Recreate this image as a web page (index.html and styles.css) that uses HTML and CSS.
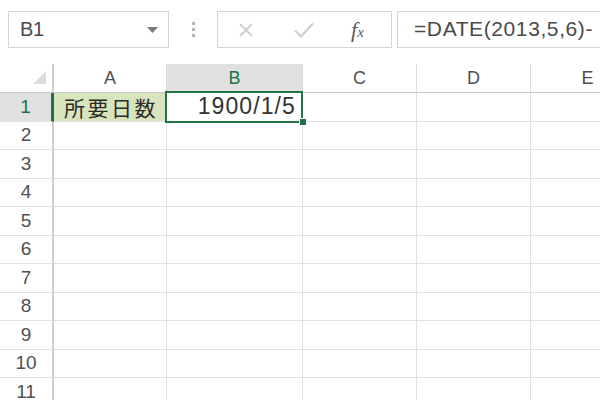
FILE: index.html
```html
<!DOCTYPE html>
<html lang="ja">
<head>
<meta charset="utf-8">
<link rel="stylesheet" href="styles.css">
</head>
<body>
<div class="toolbar">
  <div class="namebox">
    <span class="name">B1</span>
    <svg class="drop" width="11" height="6" viewBox="0 0 11 6"><polygon points="0,0 11,0 5.5,6" fill="#7a7a7a"/></svg>
  </div>
  <div class="dots"><i></i><i></i><i></i></div>
  <div class="fbuttons">
    <svg class="ico" width="18" height="18" viewBox="0 0 18 18"><path d="M3 3 L15 15 M15 3 L3 15" stroke="#cfcfcf" stroke-width="2" fill="none"/></svg>
    <svg class="ico" width="22" height="18" viewBox="0 0 22 18"><path d="M2 9.5 L8 15.5 L20 2.5" stroke="#cfcfcf" stroke-width="2.2" fill="none"/></svg>
    <span class="fx">f<span class="x">x</span></span>
  </div>
  <div class="formula">=DATE(2013,5,6)-</div>
</div>
<div class="sheet">
  <div class="corner"><svg width="13" height="13" viewBox="0 0 13 13"><polygon points="13,0 13,13 0,13" fill="#dcdcdc"/></svg></div>
  <div class="ch">A</div><div class="ch selh">B</div><div class="ch">C</div><div class="ch">D</div><div class="ch">E</div>

  <div class="rh selr">1</div><div class="c a1">所要日数</div><div class="c b1"><span class="val">1900/1/5</span><span class="selbox"></span><span class="handle"></span></div><div class="c"></div><div class="c"></div><div class="c"></div>
  <div class="rh">2</div><div class="c"></div><div class="c"></div><div class="c"></div><div class="c"></div><div class="c"></div>
  <div class="rh">3</div><div class="c"></div><div class="c"></div><div class="c"></div><div class="c"></div><div class="c"></div>
  <div class="rh">4</div><div class="c"></div><div class="c"></div><div class="c"></div><div class="c"></div><div class="c"></div>
  <div class="rh">5</div><div class="c"></div><div class="c"></div><div class="c"></div><div class="c"></div><div class="c"></div>
  <div class="rh">6</div><div class="c"></div><div class="c"></div><div class="c"></div><div class="c"></div><div class="c"></div>
  <div class="rh">7</div><div class="c"></div><div class="c"></div><div class="c"></div><div class="c"></div><div class="c"></div>
  <div class="rh">8</div><div class="c"></div><div class="c"></div><div class="c"></div><div class="c"></div><div class="c"></div>
  <div class="rh">9</div><div class="c"></div><div class="c"></div><div class="c"></div><div class="c"></div><div class="c"></div>
  <div class="rh">10</div><div class="c"></div><div class="c"></div><div class="c"></div><div class="c"></div><div class="c"></div>
  <div class="rh">11</div><div class="c"></div><div class="c"></div><div class="c"></div><div class="c"></div><div class="c"></div>
</div>
</body>
</html>
```
FILE: styles.css
```css
html, body {
  margin: 0;
  padding: 0;
  background: #ffffff;
  width: 600px;
  height: 400px;
  overflow: hidden;
  font-family: "Liberation Sans", "Noto Sans CJK JP", sans-serif;
}

.toolbar {
  height: 64px;
  box-sizing: border-box;
  padding: 11px 0 0 8px;
  display: flex;
  align-items: flex-start;
  white-space: nowrap;
}
.toolbar > * { flex-shrink: 0; }

.namebox {
  width: 161px;
  height: 37px;
  box-sizing: border-box;
  border: 1px solid #d5d5d5;
  display: flex;
  align-items: center;
  padding: 0 10px 0 11px;
}
.name {
  flex: 1;
  font-size: 20px;
  color: #4a4a4a;
  letter-spacing: -0.3px;
}
.drop { display: block; }

.dots {
  width: 48px;
  height: 37px;
  display: flex;
  flex-direction: column;
  align-items: center;
  justify-content: center;
  gap: 3px;
}
.dots i {
  display: block;
  width: 3px;
  height: 3px;
  background: #b4b4b4;
}

.fbuttons {
  width: 175px;
  height: 37px;
  box-sizing: border-box;
  border: 1px solid #d5d5d5;
  display: flex;
  align-items: center;
  padding: 0 0 0 19px;
}
.fbuttons .ico { display: block; }
.fbuttons .ico:first-child { margin-right: 38px; }
.fbuttons .ico:nth-child(2) { margin-right: 36px; }
.fx {
  font-family: "Liberation Serif", serif;
  font-style: italic;
  font-size: 22px;
  color: #5a5a5a;
  line-height: 1;
}
.fx .x { font-size: 15px; }

.formula {
  margin-left: 5px;
  width: 260px;
  height: 37px;
  box-sizing: border-box;
  border: 1px solid #d5d5d5;
  padding: 5px 0 0 16px;
  font-size: 21px;
  letter-spacing: 0.6px;
  color: #4a4a4a;
}

.sheet {
  display: grid;
  grid-template-columns: 54px 113px 136px 114px 114px 114px;
  grid-template-rows: 29px repeat(11, 28.5px);
}

.corner {
  box-sizing: border-box;
  border-right: 2px solid #cfcfcf;
  border-bottom: 1px solid #c8c8c8;
  display: flex;
  justify-content: flex-end;
  align-items: flex-end;
  padding: 0 6px 8px 0;
}
.corner svg { display: block; }

.ch {
  box-sizing: border-box;
  border-right: 1px solid #dadada;
  border-bottom: 1px solid #c8c8c8;
  display: flex;
  align-items: center;
  justify-content: center;
  font-size: 18px;
  color: #505050;
  padding-top: 1px;
}
.ch.selh {
  background: #e1e1e1;
  color: #217346;
  border-bottom: 2px solid #217346;
  padding-top: 2px;
}

.rh {
  box-sizing: border-box;
  border-right: 2px solid #cfcfcf;
  border-bottom: 1px solid #e1e1e1;
  display: flex;
  align-items: center;
  justify-content: center;
  font-size: 19px;
  color: #505050;
}
.rh.selr {
  background: #e1e1e1;
  color: #217346;
  border-right: 3px solid #217346;
}

.c {
  box-sizing: border-box;
  border-right: 1px solid #e1e1e1;
  border-bottom: 1px solid #e1e1e1;
  min-width: 0;
}

.a1 {
  background: #d8e4bc;
  display: flex;
  align-items: center;
  justify-content: center;
  font-family: "Noto Sans CJK JP", sans-serif;
  font-size: 21px;
  letter-spacing: 2.5px;
  color: #2a2a2a;
  padding-left: 2px;
}

.b1 {
  position: relative;
  display: flex;
  align-items: center;
  justify-content: flex-end;
  padding-right: 6px;
}
.val {
  font-size: 23px;
  letter-spacing: 1.1px;
  color: #333;
}
.selbox {
  position: absolute;
  top: -2px;
  left: -2px;
  right: -1px;
  bottom: -2px;
  border: 2px solid #217346;
}
.handle {
  position: absolute;
  right: -5px;
  bottom: -5px;
  width: 6px;
  height: 6px;
  background: #217346;
  border: 1px solid #ffffff;
}
```
